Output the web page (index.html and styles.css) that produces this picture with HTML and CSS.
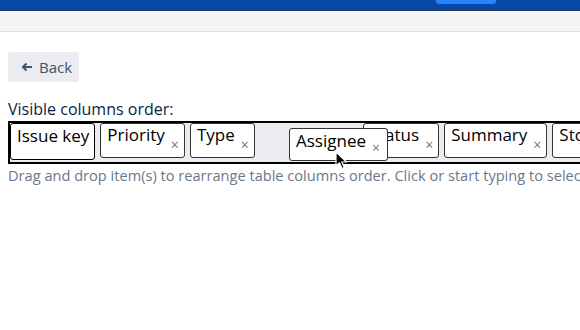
FILE: index.html
```html
<!DOCTYPE html>
<html lang="en">
<head>
  <meta charset="UTF-8">
  <meta name="viewport" content="width=device-width, initial-scale=1.0">
  <title>Columns order</title>
  <link rel="stylesheet" href="styles.css">
</head>
<body>

  <header class="top-nav">
    <div class="nav-action"></div>
  </header>
  <div class="sub-bar"></div>

  <main class="page">
    <button class="back-btn">
      <svg class="back-arrow" width="12" height="10" viewBox="0 0 12 10">
        <path d="M11 5 H2 M5.5 1.5 L2 5 L5.5 8.5" fill="none" stroke="currentColor" stroke-width="2"/>
      </svg>
      <span>Back</span>
    </button>

    <div class="field-label">Visible columns order:</div>

    <div class="column-list">
      <div class="chip fixed"><span class="chip-text">Issue key</span></div>
      <div class="chip"><span class="chip-text">Priority</span><span class="chip-remove">&times;</span></div>
      <div class="chip"><span class="chip-text">Type</span><span class="chip-remove">&times;</span></div>
      <div class="chip-placeholder"></div>
      <div class="chip"><span class="chip-text">Status</span><span class="chip-remove">&times;</span></div>
      <div class="chip"><span class="chip-text">Summary</span><span class="chip-remove">&times;</span></div>
      <div class="chip"><span class="chip-text">Story Points</span><span class="chip-remove">&times;</span></div>

      <!-- item being dragged -->
      <div class="chip dragging"><span class="chip-text">Assignee</span><span class="chip-remove">&times;</span></div>
    </div>

    <p class="hint">Drag and drop item(s) to rearrange table columns order. Click or start typing to select more columns.</p>
  </main>

  <svg class="cursor" width="14" height="20" viewBox="0 0 14 20">
    <path d="M1 1 L1 15 L4.5 11.8 L7 17.5 L9.2 16.5 L6.8 11 L11.5 11 Z" fill="#000" stroke="#fff" stroke-width="1.2" stroke-linejoin="round"/>
  </svg>

</body>
</html>
```

FILE: styles.css
```css
:root {
  --nav-blue: #0747a6;
  --nav-line: #253858;
  --action-blue: #2684ff;
  --sub-bg: #f4f5f7;
  --sub-border: #dfe1e6;
  --neutral: #ebecf0;
  --text: #091e42;
  --text-muted: #42526e;
  --hint: #6b778c;
}

html,
body {
  overflow: hidden;
}

body {
  margin: 0;
  padding: 0;
  font-family: 'Open Sans', 'Noto Sans', sans-serif;
  color: var(--text);
  background: #ffffff;
  position: relative;
  min-height: 100vh;
}

.top-nav {
  height: 10px;
  background-color: var(--nav-blue);
  border-bottom: 1px solid var(--nav-line);
  display: flex;
  justify-content: flex-end;
  padding-right: 84px;
}

.nav-action {
  width: 60px;
  height: 4px;
  background-color: var(--action-blue);
  border-radius: 0 0 3px 3px;
}

.sub-bar {
  height: 20px;
  background-color: var(--sub-bg);
  border-bottom: 1px solid var(--sub-border);
}

.page {
  padding: 20px 0 0 8px;
}

.back-btn {
  display: flex;
  align-items: center;
  gap: 6px;
  height: 30px;
  width: 71px;
  padding: 0 0 0 13px;
  border: none;
  border-radius: 3px;
  background-color: var(--neutral);
  color: var(--text-muted);
  font-family: inherit;
  font-size: 15px;
  cursor: pointer;
}

.field-label {
  margin-top: 17px;
  font-size: 16px;
  line-height: 20px;
  color: var(--text);
}

.column-list {
  position: relative;
  display: flex;
  align-items: flex-start;
  gap: 5px;
  margin-top: 2px;
  width: 800px;
  height: 39px;
  border: 2px solid #000;
  border-right: none;
  background-color: var(--neutral);
}

.chip {
  display: flex;
  align-items: flex-start;
  height: 33px;
  padding: 0 5px 0 6px;
  flex-shrink: 0;
  background-color: #ffffff;
  border: 1px solid #333;
  border-radius: 3px;
  white-space: nowrap;
}

.chip.fixed {
  height: 35px;
  padding-right: 5px;
  border-color: #000;
}

.chip.fixed .chip-text {
  padding-top: 2px;
}

.chip-text {
  font-size: 17px;
  line-height: 20px;
  padding-top: 1px;
  color: #000;
}

.chip-remove {
  align-self: flex-end;
  margin: 0 0 5px 6px;
  font-size: 14px;
  line-height: 14px;
  color: var(--hint);
}

.chip-placeholder {
  width: 98px;
  flex-shrink: 0;
}

.chip.dragging {
  position: absolute;
  left: 279px;
  top: 5px;
  height: 31px;
  padding-right: 7px;
  z-index: 5;
}

.chip.dragging .chip-text {
  padding-top: 2px;
}

.hint {
  margin: 2px 0 0;
  font-size: 14.6px;
  line-height: 18px;
  color: var(--hint);
  white-space: nowrap;
}

.cursor {
  position: absolute;
  left: 335px;
  top: 151px;
  z-index: 10;
}
```
